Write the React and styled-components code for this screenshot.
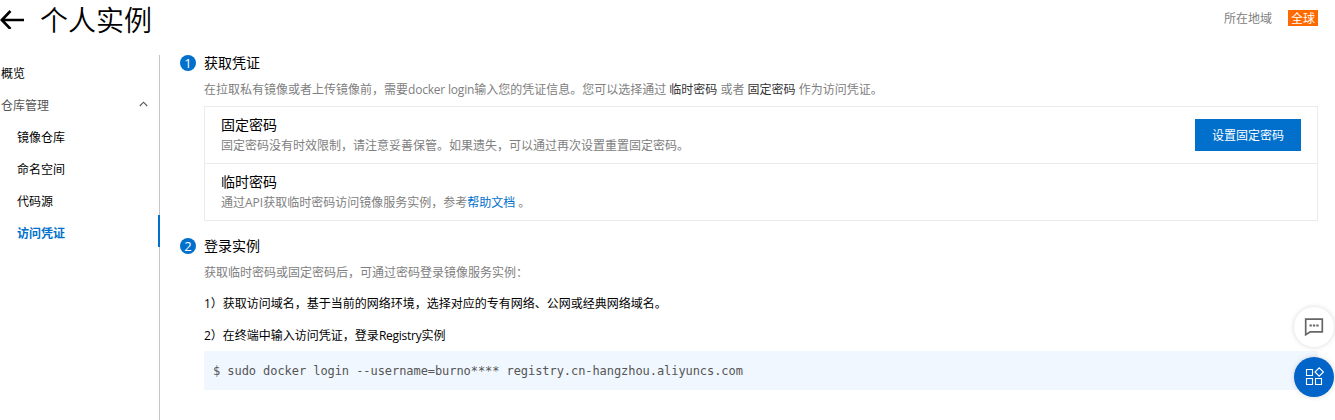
import React from 'react';
import styled, { createGlobalStyle } from 'styled-components';

const GlobalStyle = createGlobalStyle`
  * { box-sizing: border-box; }
  body {
    margin: 0;
    background: #fff;
    color: #000;
    font-family: "Open Sans", "Noto Sans CJK SC", sans-serif;
    font-size: 12px;
    line-height: 18px;
    overflow: hidden;
  }
`;

const Page = styled.div`
  display: flex;
  flex-direction: column;
  height: 420px;
  overflow: hidden;
`;

const Header = styled.header`
  display: flex;
  align-items: flex-start;
  height: 55px;
  padding: 0 17px 0 0;
`;

const BackIcon = styled.svg`
  width: 25px;
  height: 20px;
  margin: 9px 15px 0 0;
`;

const Title = styled.h1`
  flex: 1;
  margin: 0;
  font-family: "Noto Sans CJK SC", sans-serif;
  font-size: 28px;
  font-weight: 350;
  line-height: 38px;
`;

const Region = styled.div`
  display: flex;
  align-items: center;
  gap: 16px;
  height: 16px;
  margin-top: 10px;
  color: #808080;
  line-height: 18px;
`;

const RegionLabel = styled.span`
  padding-top: 2px;
`;

const RegionTag = styled.span`
  width: 30px;
  height: 16px;
  background: #ff6a00;
  color: #fff;
  line-height: 17px;
  text-align: center;
`;

const Body = styled.div`
  display: flex;
  flex: 1;
  min-height: 0;
`;

const Sidebar = styled.nav`
  width: 160px;
  border-right: 1px solid #c3c5c6;
`;

const MenuItem = styled.div`
  display: flex;
  align-items: center;
  justify-content: space-between;
  height: 32px;
  margin-right: -1px;
  padding: 6px 10px 0 ${(p) => (p.$nested ? 17 : 1)}px;
  border-right: 2px solid ${(p) => (p.$active ? '#0070cc' : 'transparent')};
  color: ${(p) => (p.$active ? '#0070cc' : p.$group ? '#555' : '#000')};
  font-weight: ${(p) => (p.$active ? 600 : 400)};
`;

const Chevron = styled.svg`
  width: 9px;
  height: 6px;
  margin-top: -5px;
`;

const Main = styled.main`
  flex: 1;
  padding: 0 17px 0 20px;
`;

const Step = styled.section`
  display: grid;
  grid-template-columns: 16px 1fr;
  column-gap: 8px;
  margin-bottom: ${(p) => p.$gap || 0}px;
`;

const StepNumber = styled.span`
  width: 16px;
  height: 16px;
  border-radius: 50%;
  background: #0070cc;
  color: #fff;
  font-size: 13px;
  line-height: 16px;
  text-align: center;
`;

const StepTitle = styled.h2`
  margin: 0;
  font-size: 14px;
  font-weight: 400;
  line-height: 16px;
`;

const StepBody = styled.div`
  grid-column: 2;
`;

const Hint = styled.p`
  margin: ${(p) => p.$top || 0}px 0 0;
  color: #808080;
`;

const Strong = styled.span`
  color: #333;
`;

const Latin = styled.span`
  letter-spacing: ${(p) => p.$tracking}px;
`;

const Panel = styled.div`
  margin-top: 7px;
  border: 1px solid #ebebeb;
`;

const PanelRow = styled.div`
  display: flex;
  align-items: center;
  justify-content: space-between;
  height: ${(p) => p.$height}px;
  padding: 0 16px;

  & + & {
    border-top: 1px solid #ebebeb;
  }
`;

const PanelTitle = styled.h3`
  margin: 0 0 2px;
  font-size: 14px;
  font-weight: 400;
  line-height: 20px;
`;

const Button = styled.button`
  width: 106px;
  height: 32px;
  padding: 2px 0 0;
  border: 0;
  background: #0070cc;
  color: #fff;
  font: inherit;
`;

const Link = styled.a`
  color: #0070cc;
`;

const Instruction = styled.p`
  margin: ${(p) => p.$top}px 0 0;
`;

const Code = styled.pre`
  height: 39px;
  margin: 6px 0 0;
  padding: 0 9px;
  background: #f0f7ff;
  color: #555;
  font-family: "DejaVu Sans Mono", monospace;
  font-size: 12px;
  letter-spacing: -0.065px;
  line-height: 41px;
`;

const FloatingActions = styled.div`
  position: fixed;
  top: 307px;
  right: 1px;
  display: flex;
  flex-direction: column;
  gap: 10px;
`;

const FloatingButton = styled.div`
  display: flex;
  align-items: center;
  justify-content: center;
  width: 40px;
  height: 40px;
  border-radius: 50%;
  background: ${(p) => (p.$primary ? '#0064c8' : '#fff')};
  box-shadow: 0 0 5px rgba(0, 0, 0, 0.16);
`;

export default function App() {
  return (
    <Page>
      <GlobalStyle />
      <Header>
        <BackIcon viewBox="0 0 25 20" fill="none" stroke="#000" strokeWidth="2.6">
          <path d="M24 11H2M10.5 2L1.8 11L10.5 20" />
        </BackIcon>
        <Title>个人实例</Title>
        <Region>
          <RegionLabel>所在地域</RegionLabel>
          <RegionTag>全球</RegionTag>
        </Region>
      </Header>
      <Body>
        <Sidebar>
          <MenuItem>概览</MenuItem>
          <MenuItem $group>
            仓库管理
            <Chevron viewBox="0 0 9 6" fill="none" stroke="#555" strokeWidth="1.1">
              <path d="M0.8 5L4.5 1.2L8.2 5" />
            </Chevron>
          </MenuItem>
          <MenuItem $nested>镜像仓库</MenuItem>
          <MenuItem $nested>命名空间</MenuItem>
          <MenuItem $nested>代码源</MenuItem>
          <MenuItem $nested $active>访问凭证</MenuItem>
        </Sidebar>
        <Main>
          <Step $gap={17}>
            <StepNumber>1</StepNumber>
            <StepTitle>获取凭证</StepTitle>
            <StepBody>
              <Hint $top={10}>
                在拉取私有镜像或者上传镜像前，需要<Latin $tracking={-0.2}>docker login</Latin>输入您的凭证信息。您可以选择通过 <Strong>临时密码</Strong> 或者 <Strong>固定密码</Strong> 作为访问凭证。
              </Hint>
              <Panel>
                <PanelRow $height={56}>
                  <div>
                    <PanelTitle>固定密码</PanelTitle>
                    <Hint>固定密码没有时效限制，请注意妥善保管。如果遗失，可以通过再次设置重置固定密码。</Hint>
                  </div>
                  <Button>设置固定密码</Button>
                </PanelRow>
                <PanelRow $height={57}>
                  <div>
                    <PanelTitle>临时密码</PanelTitle>
                    <Hint>通过API获取临时密码访问镜像服务实例，参考<Link>帮助文档</Link> 。</Hint>
                  </div>
                </PanelRow>
              </Panel>
            </StepBody>
          </Step>
          <Step>
            <StepNumber>2</StepNumber>
            <StepTitle>登录实例</StepTitle>
            <StepBody>
              <Hint $top={10}>获取临时密码或固定密码后，可通过密码登录镜像服务实例：</Hint>
              <Instruction $top={13}>1）获取访问域名，基于当前的网络环境，选择对应的专有网络、公网或经典网络域名。</Instruction>
              <Instruction $top={14}>2）在终端中输入访问凭证，登录<Latin $tracking={-0.25}>Registry</Latin>实例</Instruction>
              <Code>$ sudo docker login --username=burno**** registry.cn-hangzhou.aliyuncs.com</Code>
            </StepBody>
          </Step>
        </Main>
      </Body>
      <FloatingActions>
        <FloatingButton>
          <svg width="20" height="20" viewBox="0 0 20 20" fill="none" stroke="#666" strokeWidth="1.7">
            <path d="M1.7 2.2H18.3V14.8H6.3L1.7 17.8Z" />
            <path d="M5.5 8.5H7.8M8.9 8.5H11.2M12.3 8.5H14.6" strokeWidth="2.2" />
          </svg>
        </FloatingButton>
        <FloatingButton $primary>
          <svg width="20" height="20" viewBox="0 0 20 20" fill="none" stroke="#fff" strokeWidth="1.1">
            <path d="M2.5 2.5H8.5V8.5H2.5ZM2.5 11.5H8.5V17.5H2.5ZM11.5 11.5H17.5V17.5H11.5ZM15.2 0.8L19.4 5L15.2 9.2L11 5Z" />
          </svg>
        </FloatingButton>
      </FloatingActions>
    </Page>
  );
}
